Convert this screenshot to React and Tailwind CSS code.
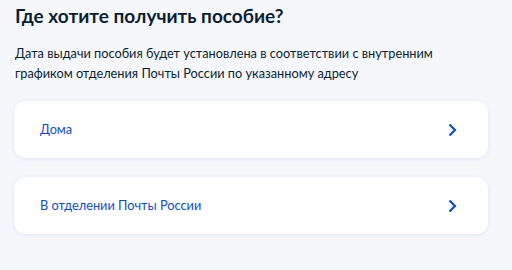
import React from 'react'

const Chevron = () => (
  <svg width="10" height="14" viewBox="0 0 10 14" fill="none">
    <path d="M2.5 1.5L8 7L2.5 12.5" stroke="#0d4cd3" strokeWidth="2.2" />
  </svg>
)

const Option = ({ label }) => (
  <button
    type="button"
    className="w-full h-[57px] bg-white rounded-[12px] shadow-[0_1px_4px_rgba(40,70,160,0.10)] flex items-center justify-between pl-[26px] pr-[31px] text-left"
  >
    <span className="text-[12.75px] text-[#0d4cd3]">{label}</span>
    <Chevron />
  </button>
)

export default function App() {
  return (
    <div className="w-[512px] h-[270px] bg-[#f5f7fb] overflow-hidden font-['Lato',sans-serif] text-[#0b1f33]">
      <div className="pl-[15px] pr-[24px] pt-[4px]">
        <h1 className="text-[19px] font-bold leading-[24px]">Где хотите получить пособие?</h1>
        <p className="mt-[15px] text-[12.75px] leading-[20px]">
          Дата выдачи пособия будет установлена в соответствии с внутренним графиком отделения Почты России по указанному адресу
        </p>
      </div>
      <div className="mt-[18px] pl-[14px] pr-[24px] flex flex-col gap-[19px]">
        <Option label="Дома" />
        <Option label="В отделении Почты России" />
      </div>
    </div>
  )
}
